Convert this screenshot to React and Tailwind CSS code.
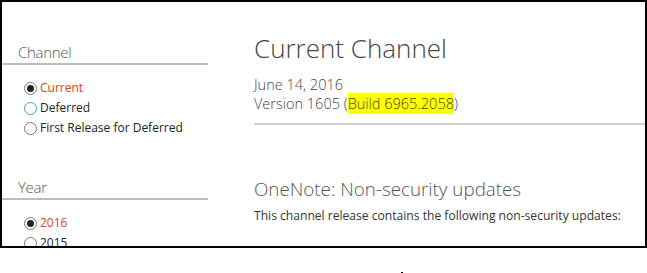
import React from "react";

function Radio({ label, checked, focus }) {
    return (
        <div className="flex items-center h-5">
            <span
                className={
                    "w-[13px] h-[13px] rounded-full border flex items-center justify-center bg-white ml-[22px] mr-[3px] " +
                    (focus ? "border-[#3d9be9]" : "border-[#777]")
                }
            >
                {checked && <span className="w-[7px] h-[7px] rounded-full bg-[#222]" />}
            </span>
            <span className={"text-[12px] " + (checked ? "text-[#e5400f]" : "text-[#222]")}>{label}</span>
        </div>
    );
}

function Section({ title, children }) {
    return (
        <div>
            <div className="pl-4 w-[206px] border-b-2 border-[#bdbdbd] pb-[1px] text-[15px] tracking-[-0.3px] font-light text-[#555] leading-5">
                {title}
            </div>
            <div className="mt-[13px]">{children}</div>
        </div>
    );
}

export default function App() {
    return (
        <div className="w-[647px] h-[273px] bg-white font-['Open_Sans',sans-serif]">
            <div className="h-[248px] border-2 border-black overflow-hidden flex">
                <div className="w-[236px] shrink-0 pt-[40px]">
                    <Section title="Channel">
                        <Radio label="Current" checked />
                        <Radio label="Deferred" focus />
                        <Radio label="First Release for Deferred" />
                    </Section>
                    <div className="mt-[39px]">
                        <Section title="Year">
                            <Radio label="2016" checked />
                            <Radio label="2015" />
                        </Section>
                    </div>
                </div>
                <div className="flex-1 pl-4 pt-[28px]">
                    <h1 className="text-[26px] font-light text-[#444] leading-9">Current Channel</h1>
                    <div className="mt-[9px] text-[14.5px] font-light text-[#444] leading-[19px]">
                        <div>June 14, 2016</div>
                        <div>
                            Version 1605 (<span className="bg-[#ffff00] py-[1px]">Build 6965.2058</span>)
                        </div>
                    </div>
                    <div className="mt-[10px] border-t-2 border-[#d0d0d0]" />
                    <h2 className="mt-[52px] text-[18.8px] font-light text-[#555] leading-6">
                        OneNote: Non-security updates
                    </h2>
                    <p className="mt-[7px] text-[12.1px] text-[#333] leading-4">
                        This channel release contains the following non-security updates:
                    </p>
                </div>
            </div>
            <div className="pl-[401px] pt-[24px]">
                <div className="w-[2px] h-[2px] bg-black" />
            </div>
        </div>
    );
}
